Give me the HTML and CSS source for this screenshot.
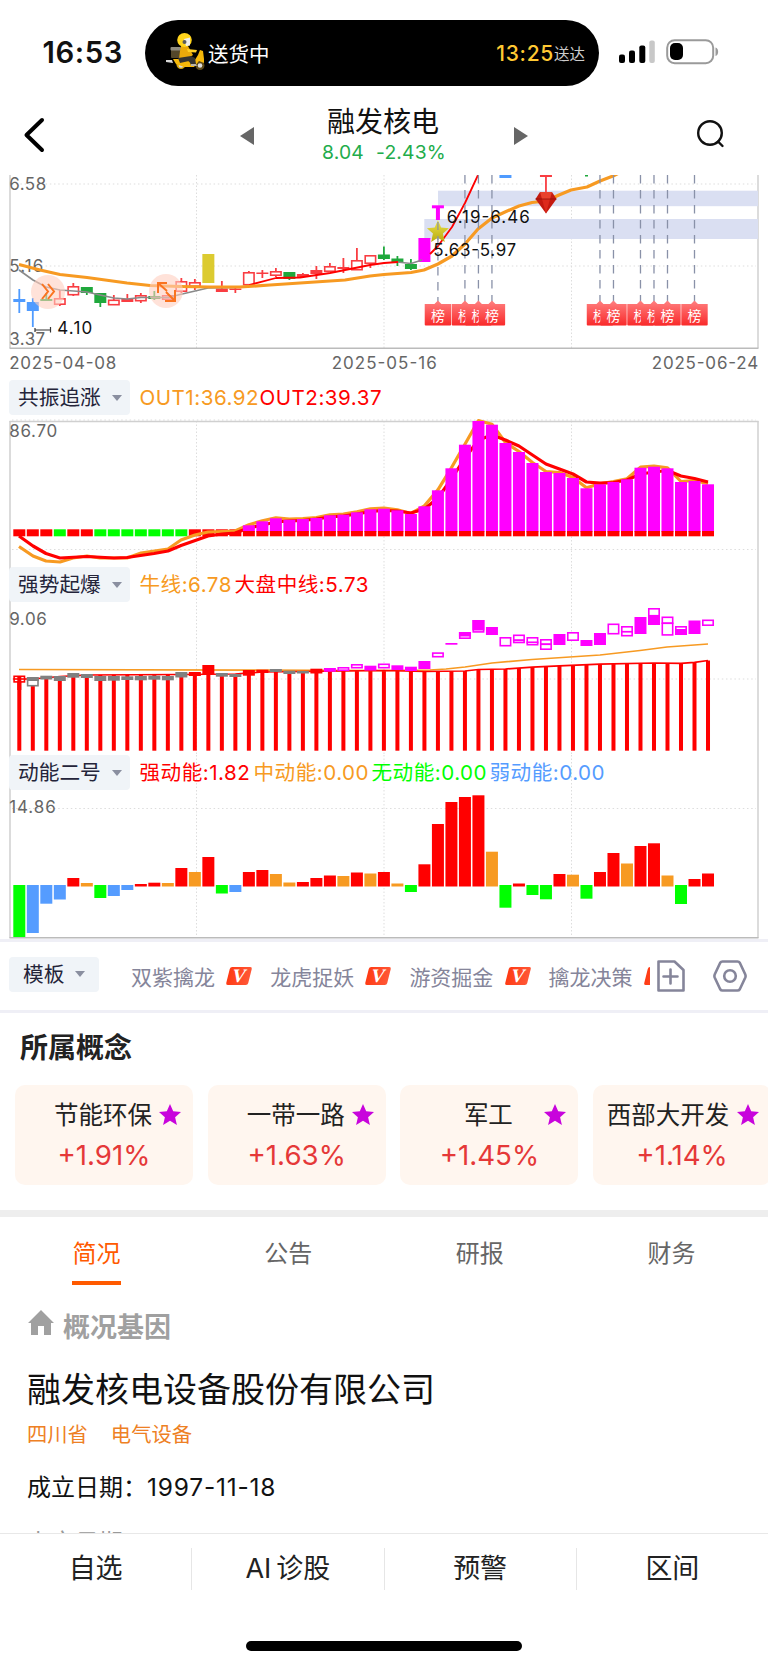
FILE: index.html
```html
<!DOCTYPE html>
<html lang="zh-CN">
<head>
    <meta charset="UTF-8">
    <meta name="viewport" content="width=device-width, initial-scale=1.0">
    <title>融发核电</title>
    <link rel="stylesheet" href="styles.css">
</head>
<body>
<div class="status-bar">
    <div class="clock">16:53</div>
    <div class="island">
        <svg class="rider" width="40" height="40" viewBox="0 0 40 40">
            <circle cx="16" cy="33.500" r="4.500" fill="#d8a60c"/><circle cx="16" cy="34.500" r="2.300" fill="#ddd"/>
            <circle cx="35" cy="34.500" r="4.500" fill="#5d4a1a"/><circle cx="35" cy="34.500" r="2.300" fill="#ddd"/>
            <path d="M1 29l6 0 1 3-7-1z" fill="#d8d8d8"/>
            <path d="M8 28h10l10 4 5-8 2-5 3 1 1 8v4l-5-2-5 6H19l-8-3z" fill="#f5b80a"/>
            <rect x="6" y="17" width="10" height="10" rx="1" fill="#54472a"/>
            <rect x="5.500" y="16" width="10.500" height="3.500" rx="1" fill="#8d8a80"/>
            <path d="M16 15h7l5 9-3 2-2 2h-9l1-8z" fill="#eaa90a"/>
            <path d="M22 18l10 1-1 2.500-8-.5z" fill="#ffcf25"/>
            <path d="M13 27l13-2 4 2 1 6-5 1-2-4-9 2z" fill="#34332f"/>
            <path d="M26 33l5 0 1 2h-6z" fill="#b9b4a8"/>
            <ellipse cx="19.500" cy="9" rx="7.300" ry="7" fill="#ffd41c"/>
            <path d="M19 8l6-1.500v8l-4 .5z" fill="#eee"/><circle cx="19.500" cy="11" r="2" fill="#5b5b5b"/>
        </svg>
        <span class="island-text">送货中</span>
        <span class="island-time">13:25</span>
        <span class="island-arrive">送达</span>
    </div>
    <svg class="signal" width="36" height="24" viewBox="0 0 36 24">
        <rect x="0" y="14.500" width="6" height="8.500" rx="2"/>
        <rect x="10" y="10.500" width="6" height="12.500" rx="2"/>
        <rect x="20.300" y="5.500" width="6" height="17.500" rx="2"/>
        <rect x="30.300" y="0.500" width="5.500" height="22.500" rx="2" fill="#c8c8c8"/>
    </svg>
    <svg class="battery" width="54" height="26" viewBox="0 0 54 26">
        <rect x="1.200" y="1.200" width="46" height="23" rx="7.500" fill="none" stroke="#9a9a9a" stroke-width="2"/>
        <rect x="4" y="4" width="13" height="17" rx="5"/>
        <path d="M49.500 8.500c3.500 1 3.500 7.500 0 8.500z" fill="#9a9a9a"/>
    </svg>
</div>

<header class="navbar">
    <svg class="back" width="22" height="36" viewBox="0 0 22 36"><path d="M19 3L3.500 18 19 33" fill="none" stroke="#000" stroke-width="4" stroke-linecap="round" stroke-linejoin="round"/></svg>
    <svg class="prev" width="14" height="18" viewBox="0 0 14 18"><path d="M14 0v18L0 9z" fill="#666"/></svg>
    <div class="stock">
        <h1>融发核电</h1>
        <p><span>8.04</span><span>-2.43%</span></p>
    </div>
    <svg class="next" width="14" height="18" viewBox="0 0 14 18"><path d="M0 0v18l14-9z" fill="#666"/></svg>
    <svg class="search" width="30" height="30" viewBox="0 0 30 30"><g fill="none" stroke="#111" stroke-width="2.400" stroke-linecap="round"><circle cx="14" cy="14" r="11.800"/><path d="M22 22.500l4.500 4.500"/></g></svg>
</header>

<svg id="kline" class="kline" width="768" height="205" viewBox="0 175 768 205"></svg>

<section class="panel">
    <svg id="panel1" width="768" height="187" viewBox="0 380 768 187"></svg>
    <div class="panel-head">
        <button class="picker">共振追涨<i class="caret"></i></button>
        <span class="val orange out1">OUT1:36.92</span><span class="val red">OUT2:39.37</span>
    </div>
</section>
<section class="panel">
    <svg id="panel2" width="768" height="188" viewBox="0 567 768 188"></svg>
    <div class="panel-head">
        <button class="picker">强势起爆<i class="caret"></i></button>
        <span class="val orange bull">牛线:6.78</span><span class="val red">大盘中线:5.73</span>
    </div>
</section>
<section class="panel">
    <svg id="panel3" width="768" height="184" viewBox="0 755 768 184"></svg>
    <div class="panel-head">
        <button class="picker">动能二号<i class="caret"></i></button>
        <span class="val red force">强动能:1.82</span><span class="val orange force2">中动能:0.00</span><span class="val green force3">无动能:0.00</span><span class="val blue">弱动能:0.00</span>
    </div>
</section>

<div class="template-bar">
    <button class="picker small">模板<i class="caret"></i></button>
    <div class="templates">
        <span>双紫擒龙</span><i class="vip">V</i>
        <span>龙虎捉妖</span><i class="vip">V</i>
        <span>游资掘金</span><i class="vip">V</i>
        <span>擒龙决策</span><i class="vip"></i>
    </div>
    <svg class="add" width="28" height="32" viewBox="0 0 28 32"><g fill="none" stroke="#85859a" stroke-width="2.600" stroke-linejoin="round"><path d="M1.500 1.500h16l9 8.500v20.500h-25z"/><path d="M6.500 16.500h14M13.500 9.500v14" stroke-linecap="round"/></g></svg>
    <svg class="gear" width="34" height="32" viewBox="0 0 34 32"><g fill="none" stroke="#85859a" stroke-width="2.600" stroke-linejoin="round"><path d="M9.500 1.500h15q1.500 0 2.300 1.300l5.400 11.400q.8 1.800 0 3.600l-5.400 11.400q-.8 1.300-2.300 1.300h-15q-1.500 0-2.300-1.300L1.800 17.800q-.8-1.800 0-3.600L7.200 2.800Q8 1.500 9.500 1.500z"/><circle cx="17" cy="16" r="5.800"/></g></svg>
</div>

<section class="concepts">
    <h2>所属概念</h2>
    <div class="cards">
        <div class="card"><p>节能环保</p><b>+1.91%</b><svg class="star" viewBox="0 0 24 24"><path d="M12 1l3.200 7.300 7.800.7-5.900 5.200L18.900 22 12 17.800 5.100 22l1.800-7.800L1 9l7.800-.7z"/></svg></div>
        <div class="card"><p>一带一路</p><b>+1.63%</b><svg class="star" viewBox="0 0 24 24"><path d="M12 1l3.200 7.300 7.800.7-5.900 5.200L18.900 22 12 17.800 5.100 22l1.800-7.800L1 9l7.800-.7z"/></svg></div>
        <div class="card"><p>军工</p><b>+1.45%</b><svg class="star" viewBox="0 0 24 24"><path d="M12 1l3.200 7.300 7.800.7-5.900 5.200L18.900 22 12 17.800 5.100 22l1.800-7.800L1 9l7.800-.7z"/></svg></div>
        <div class="card long"><p>西部大开发</p><b>+1.14%</b><svg class="star" viewBox="0 0 24 24"><path d="M12 1l3.200 7.300 7.800.7-5.900 5.200L18.900 22 12 17.800 5.100 22l1.800-7.800L1 9l7.800-.7z"/></svg></div>
    </div>
</section>

<nav class="tabs">
    <a class="active">简况</a>
    <a>公告</a>
    <a>研报</a>
    <a>财务</a>
</nav>

<section class="profile">
    <h3><svg width="26" height="26" viewBox="0 0 26 26"><path d="M13 0l13 13h-3v12h-7v-9h-6v9H3V13H0z" fill="#a0a0a0"/></svg>概况基因</h3>
    <h2>融发核电设备股份有限公司</h2>
    <p class="tags"><span>四川省</span><span>电气设备</span></p>
    <p class="row"><span>成立日期：</span>1997-11-18</p>
    <p class="row faded"><span>上市日期：</span>2010-03-12</p>
</section>

<footer class="bottom-bar">
    <div class="actions">
        <a>自选</a>
        <a><span class="ai">AI</span>诊股</a>
        <a>预警</a>
        <a>区间</a>
    </div>
    <div class="home-indicator"></div>
</footer>

<script src="script.js"></script>
</body>
</html>
```
FILE: styles.css
```css
* { margin: 0; padding: 0; box-sizing: border-box; font-family: Inter, "Noto Sans CJK SC", sans-serif; }
body {
    width: 768px;
    height: 1665px;
    background: #fff;
    color: #111;
    overflow: hidden;
}
svg { display: block; flex-shrink: 0; }
button { border: none; }
a { text-decoration: none; }

/* status bar */
.status-bar { height: 96px; padding-top: 20px; display: flex; }
.clock { width: 145px; padding-left: 42.5px; line-height: 66px; font-size: 29.3px; font-weight: 600; letter-spacing: 0.6px; }
.island {
    width: 454px; height: 66px; border-radius: 33px; background: #000;
    display: flex; align-items: center; padding: 0 14px 0 20px; color: #fff;
}
.rider { margin-top: -4px; }
.island-text { font-size: 20.5px; margin-left: 3px; }
.island-time { font-size: 21px; font-weight: 500; color: #ffc933; margin-left: auto; letter-spacing: 0.7px; }
.island-arrive { font-size: 15.5px; color: #ccc; }
.signal { margin: 20px 0 0 20px; }
.battery { margin: 19px 0 0 11px; }

/* title */
.navbar { height: 79px; display: flex; padding-left: 23px; }
.back { margin-top: 21px; }
.prev { margin: 31px 0 0 195px; }
.stock { width: 260px; text-align: center; }
.stock h1 { font-size: 28px; font-weight: 400; line-height: 34px; margin: 9px 2px 0 0; }
.stock p { font-size: 19.3px; line-height: 24px; margin-top: 1px; color: #22ac4b; display: flex; justify-content: center; gap: 12px; letter-spacing: 0.2px; }
.next { margin-top: 31px; }
.search { margin: 23px 0 0 168px; }

/* charts */
.panel { display: grid; }
.panel > * { grid-area: 1 / 1; }
.panel-head { display: flex; height: 35px; padding-left: 9px; z-index: 1; }
.picker {
    width: 121px; height: 35px; border-radius: 4px; background: #f0f4f8;
    color: #24243a; font-size: 20.7px; line-height: 35px; text-align: left; padding-left: 9px;
    display: flex; align-items: center;
}
.caret { border: 5px solid transparent; border-top: 6px solid #8a8fa0; border-bottom: none; margin-left: 11px; }
.val { font-size: 20.6px; line-height: 35px; white-space: nowrap; letter-spacing: 0.5px; }
.val:nth-child(2) { margin-left: 9.5px; }
.out1 { width: 120px; }
.bull { width: 95px; }
.force { width: 114px; }
.force2 { width: 118px; }
.force3 { width: 118px; }
.orange { color: #f79a22; }
.red { color: #f00; }
.green { color: #0f0; }
.blue { color: #559cff; }

.template-bar {
    height: 74px; border-top: 3px solid #efeff6; border-bottom: 3px solid #efeff6;
    display: flex; padding: 14px 0 0 9px;
}
.picker.small { width: 90px; padding-left: 14px; margin-top: 0.5px; }
.templates { display: flex; align-items: center; width: 519px; height: 40px; margin-left: 32px; overflow: hidden; }
.templates span { font-size: 21px; width: 84px; margin-right: 11px; color: #85859a; flex-shrink: 0; }
.vip {
    width: 22px; height: 18px; margin: 0 20px 0 2.2px; flex-shrink: 0;
    background: linear-gradient(90deg, #ff3b14, #ff5736); border-radius: 2px; transform: skewX(-14deg);
    color: #fff; font: 700 19px/18px "Liberation Serif", serif; text-align: center;
}
.add { margin: 4px 0 0 7px; }
.gear { margin: 4px 0 0 28px; }

/* concepts */
.concepts { height: 204px; padding-left: 15px; overflow: hidden; border-bottom: 7px solid #eee; }
.concepts h2 { font-size: 28px; line-height: 40px; margin: 15px 0 17px 5px; font-weight: 700; color: #222; }
.cards { display: flex; gap: 14.7px; }
.card { position: relative; width: 178px; height: 100px; border-radius: 10px; background: #fff6ef; text-align: center; flex-shrink: 0; padding-top: 12px; }
.card p { font-size: 24.5px; line-height: 36px; color: #222; margin-right: 2px; }
.card.long p { margin-right: 28px; }
.card b { display: block; font-weight: 400; font-size: 27.7px; line-height: 40px; color: #e53838; margin-top: 2px; }
.star { position: absolute; right: 11px; top: 18px; width: 24px; height: 24px; fill: #c804dc; }

/* tabs */
.tabs { display: flex; height: 68px; padding: 17px 72px 0; justify-content: space-between; }
.tabs a { font-size: 24px; line-height: 40px; height: 51px; width: 49px; text-align: center; color: #666; white-space: nowrap; }
.tabs .active { color: #ff5a00; border-bottom: 4px solid #ff5a00; }

/* profile */
.profile { height: 248px; padding: 22px 27px 0; overflow: hidden; }
.profile h3 { display: flex; gap: 9px; font-size: 27px; line-height: 42px; font-weight: 600; color: #a0a0a0; }
.profile h3 svg { margin: 3px 0 0 1px; }
.profile h2 { font-size: 34px; font-weight: 400; line-height: 50px; margin-top: 16px; }
.tags { font-size: 20.3px; line-height: 30px; color: #ee8024; margin-top: 5px; display: flex; gap: 23px; }
.row { font-size: 24.5px; line-height: 34px; margin-top: 20px; letter-spacing: 0.8px; white-space: nowrap; }
.row span { display: inline-block; width: 120px; font-size: 24px; letter-spacing: 0; }
.faded { color: #999; margin-top: 20px; letter-spacing: 0.3px; }

/* bottom */
.bottom-bar { height: 132px; border-top: 1px solid #e8e8e8; background: #fff; position: relative; }
.actions { display: flex; padding-top: 14px; }
.actions a { flex: 1; height: 42px; line-height: 42px; font-size: 27px; text-align: center; color: #222; border-left: 1px solid #e6e6e6; }
.actions a:first-child { border-left: none; }
.ai { margin-right: 5px; }
.home-indicator { width: 276px; height: 10px; border-radius: 5px; background: #000; margin: 51px auto 0; }
```
FILE: script.js
```js
const STEP = 13.504, X0 = 19.3;
const cx = i => X0 + STEP * i;
const RED = '#f00', GREEN = '#0f0', MAGENTA = '#f0f', ORANGE = '#f79a22', BLUE = '#559cff', GRAY = '#808080';

const rect = (x, y, w, h, fill, extra = '') => `<rect x="${x}" y="${y}" width="${w}" height="${h}" fill="${fill}" ${extra}/>`;
const line = (x1, y1, x2, y2, color, w = 1, extra = '') => `<line x1="${x1}" y1="${y1}" x2="${x2}" y2="${y2}" stroke="${color}" stroke-width="${w}" ${extra}/>`;
const poly = (pts, color, w) => `<polyline points="${pts}" fill="none" stroke="${color}" stroke-width="${w}" stroke-linejoin="round"/>`;
const label = (s, x, y, len, color = '#666') => `<text x="${x - 0.8}" y="${y}" font-size="17" fill="${color}" textLength="${len}">${s}</text>`;
const bar = (i, top, bottom, fill) => rect(cx(i) - 6, top, 12, bottom - top, fill);
const box = (i, top, bottom, color) => rect(cx(i) - 5.2, top + 0.8, 10.4, Math.max(bottom - top - 1.6, 0.1), '#fff', `stroke="${color}" stroke-width="1.6"`);

function grid(top, bottom, rows) {
    let s = '';
    for (const x of [196.5, 384, 571.5]) s += line(x, top, x, bottom, '#ddd', 1, 'stroke-dasharray="1.5 2"');
    for (const y of rows) s += line(12, y, 756, y, '#ddd', 1.2, 'stroke-dasharray="1.5 2.7"');
    s += line(10, top, 10, bottom, '#ccc', 1.4) + line(758, top, 758, bottom, '#d4d4d4', 1.6);
    return s;
}

// ---- k line ----
function drawKline() {
    let s = grid(175, 348, [184, 266]);
    s += line(9.5, 348.3, 758.5, 348.3, '#bbb', 1.4);
    s += rect(438, 190.7, 320, 15.5, '#dadff2') + rect(424.3, 219, 333.7, 20, '#dadff2');
    s += label('6.58', 10, 190, 37) + label('5.16', 10, 272, 34) + label('3.37', 10, 344.5, 36);

    // [index, top, bottom, high, low, kind]
    const up = '#f93d42', down = '#1fa83c', blue = '#4f9bff';
    const candles = [
        [0, 299, 302, 289, 313, 'b'], [1, 302, 311, 298, 327, 'b'], [2, 299, 301, 293, 301, 'g'],
        [3, 298, 305, 290, 306, 'r'], [4, 286, 295.5, 283, 296, 'r'], [5, 287, 293, 287, 295, 'g'],
        [6, 293, 303, 293, 307, 'g'], [7, 299.5, 305.5, 295, 305, 'r'], [8, 299, 302, 294, 302, 'r'],
        [9, 295, 301.5, 293, 303, 'r'], [10, 296, 299, 291, 300, 'g'], [11, 295, 300, 295, 300, 'r'],
        [12, 281, 292, 278, 293, 'r'], [13, 282, 287, 279, 290, 'r'],
        [15, 288.5, 292, 281, 292, 'r'], [16, 288.5, 290, 288, 293, 'r'], [17, 272, 285.5, 271, 285, 'r'],
        [18, 272.5, 274, 270, 278, 'r'], [19, 271, 276, 268, 277, 'r'], [20, 272, 279, 272, 280, 'g'],
        [21, 274, 277, 273, 278, 'r'], [22, 270, 274, 266, 279, 'r'], [23, 266, 272, 263, 272, 'r'],
        [24, 267, 269, 258, 273, 'r'], [25, 260, 270.5, 248, 270, 'r'], [26, 255, 264, 255, 268, 'r'],
        [27, 254.5, 259, 246.5, 260, 'g'], [28, 258.5, 262, 256, 266, 'g'], [29, 264, 269, 259, 270, 'g']
    ];
    for (const [i, t, b, h, l, k] of candles) {
        const c = k === 'r' ? up : k === 'g' ? down : blue;
        s += line(cx(i), h, cx(i), l, c, 1.8);
        s += k === 'r' && b - t > 4 ? box(i, t, b, c) : bar(i, t, b, c);
    }
    s += bar(14, 254, 283, '#dccb30') + bar(30, 238, 262, MAGENTA);
    s += bar(31, 205.3, 208.3, MAGENTA) + rect(cx(31) - 2, 208, 4, 12, MAGENTA);
    s += bar(36, 175, 178, blue) + rect(585, 175, 3, 1.5, down);
    s += bar(39, 175, 177, up) + line(cx(39), 176, cx(39), 192, up, 1.8);

    s += poly('19,270 33,280 46,287 60,290 87,292 100,295 114,298 127,299 141,297.500 168,297.500 180,294.500 208,288 235,287.500', '#8a8a8a', 1.6);
    s += poly('397,262 411,263.500 422,260', '#8a8a8a', 1.6);
    s += poly('249,285 276,278 300,277.500 330,273 355,268 370,265 384,263 398,262', RED, 1.8);
    s += poly('430,254 438,246 452,227 465,203 478,175', RED, 1.8);
    s += poly('19,264.500 40,270 60,274.500 87,277.500 127,283 150,285.500 180,286.500 210,287 240,287 270,285 315,282 345,280 370,276 384,274.500 411,272.500 424,270 438,264 452,256 465,244 478,229 492,218 505,212 519,206 532,202.500 546,201 559,195 571,190 587,187 600,181 613,176 619,173', ORANGE, 3.2);

    for (const [x, y] of [[48, 292], [166, 291]]) s += `<circle cx="${x}" cy="${y}" r="17" fill="#ffcfc0" opacity=".6"/>`;
    s += '<g fill="none" stroke="#fa7420" stroke-width="2"><path d="M42 284l6 7.500-6 7.500M48 284l6 7.500-6 7.500"/>';
    s += '<path d="M158 293v-10h9M158 283l9 8M175 290v11h-10M175 301l-9-9"/></g>';

    // ranking list marks
    const marks = [31, 33, 34, 35, 43, 44, 46, 47, 48, 50];
    for (const i of marks) {
        const x = cx(i);
        s += line(x, i === 31 ? 222 : 175, x, 302, '#8991a8', 1.3, 'stroke-dasharray="8.500 6.500"');
    }
    s += label('6.19-6.46', 447.5, 223, 83, '#111') + label('5.63-5.97', 434, 255.5, 83, '#111');
    for (const i of marks) {
        const x = cx(i);
        s += `<path d="M${x - 13.2} 304h9.700l3.500-3.500 3.500 3.500h9.700v20.500q0 1-1 1h-24.400q-1 0-1-1z" fill="url(#tag)"/>`;
        s += `<text x="${x}" y="320.500" font-size="14" fill="#fff" text-anchor="middle">榜</text>`;
    }
    const sx = cx(31);
    s += `<path transform="translate(${sx - 11} 220)" d="M11 0l3.200 7.500 7.800.8-6 5.200 1.800 8.500-6.800-4.300L4.200 22 6 13.500 0 8.300l7.800-.8z" fill="url(#gold)"/>`;
    s += line(sx, 222, sx, 240, '#8991a8', 1.2, 'stroke-dasharray="8 6"');
    s += '<path d="M540 192h12l4.500 7L546 213.500 535.500 199z" fill="#c41a10"/><path d="M540 192h12l-2 7h-8z" fill="#e8402c"/><path d="M542 199h8l-4 14.500z" fill="#dd2a1c"/><path d="M535.500 199h21" stroke="#8f0f08" stroke-width=".8"/>';

    s += '<path d="M35 328v4M35 330h15.500M50.500 327v5.500" stroke="#333" stroke-width="1.200" fill="none"/>';
    s += label('4.10', 58, 333.6, 35, '#111');
    s += label('2025-04-08', 10, 369, 107) + label('2025-05-16', 332.5, 369, 105) + label('2025-06-24', 652.5, 369, 106.5);
    const defs = '<defs><linearGradient id="tag" x2="0" y2="1"><stop offset="0" stop-color="#ff8080"/><stop offset="1" stop-color="#f92a2a"/></linearGradient>' +
        '<linearGradient id="gold" x2="0" y2="1"><stop offset="0" stop-color="#ece24a"/><stop offset="1" stop-color="#b8ab10"/></linearGradient></defs>';
    document.getElementById('kline').innerHTML = defs + s;
}

// ---- 共振追涨 ----
function drawPanel1() {
    let s = grid(421, 567, [420, 549.5]) + line(9.5, 421.5, 758.5, 421.5, '#d0d0d0', 1.4);
    s += label('86.70', 10, 437.3, 48);
    const tops = [525.3, 521.3, 518.3, 519.7, 519, 518, 515.3, 514.7, 512.3, 509.3, 508.7, 510.3, 514, 506.3, 490.3, 468.3, 444.7, 421, 424.7, 443, 452, 463, 472, 473, 478, 488.3, 484.3, 482, 479.3, 467.7, 466.7, 468.3, 482, 481, 484.3];
    const reds = [528, 525, 522, 521, 520.5, 519, 517, 516, 514, 511.5, 510.5, 511, 513, 509, 498, 479, 458, 440, 435, 440, 446, 455, 464, 469, 474, 482, 483.2, 482.5, 480, 474, 472, 470.5, 476, 478.5, 482];
    const line1 = '19,546.500 33,556 46,561 60,562 73,558 87,556 100,558 127,558 141,553 168,549 181,540 195,535 208,532 222,531.500 235,531 ' + tops.map((y, k) => `${cx(k + 17)},${y - 0.5}`).join(' ');
    const line2 = '19,536 33,546 46,553.500 60,558 87,556.500 114,558 127,557.500 154,553.500 168,551 181,545.500 208,536 222,534 235,533 ' + reds.map((y, k) => `${cx(k + 17)},${y}`).join(' ');
    let strip = '';
    const kinds = 'rrrgrrgggggggrrrr';
    for (let i = 0; i < 17; i++) strip += bar(i, 529.3, 536.3, kinds[i] === 'r' ? RED : GREEN);
    s += strip + poly(line1, ORANGE, 3.2) + poly(line2, RED, 3.2);
    tops.forEach((y, k) => { s += bar(k + 17, y, 532, MAGENTA) + bar(k + 17, 531, 536.3, RED); });
    document.getElementById('panel1').innerHTML = s;
}

// ---- 强势起爆 ----
function drawPanel2() {
    let s = grid(567, 755, [679]) + label('9.06', 10, 625, 37.5);
    const mid = [[0, 679], [1, 679], [3, 676.5], [5, 675], [12, 674.5], [16, 674], [18, 672], [24, 671], [27, 670.5], [30, 671.5], [33, 671], [34, 669.5], [36, 669], [38, 667.2], [40, 665.8], [43, 664.2], [47, 663], [49, 663.4], [50, 662.3], [51, 660.5]];
    const at = i => {
        const k = mid.findIndex(p => p[0] >= i);
        if (mid[k][0] === i) return mid[k][1];
        const [a, b] = [mid[k - 1], mid[k]];
        return a[1] + (b[1] - a[1]) * (i - a[0]) / (b[0] - a[0]);
    };
    for (let i = 0; i < 52; i++) s += rect(cx(i) - 2, at(i), 4, 750.7 - at(i), RED);
    s += poly('19,669.500 384,670.500 430,670 446,669 465,667 492,663 532,659.500 600,655 640,650.500 667,647 708,644', ORANGE, 1.7);
    s += poly(mid.map(p => `${cx(p[0])},${p[1]}`).join(' '), RED, 1.7);

    const solid = {
        r: [[13, 672, 676], [14, 665, 674], [17, 670, 675.7], [18, 669.7, 673], [22, 668.7, 673.5]],
        g: [[1, 677, 681], [2, 675.7, 679.5], [3, 676, 681], [4, 673, 677.7], [5, 674, 678], [6, 676, 681], [7, 676, 680.7], [8, 676.3, 680], [9, 676, 680.3], [10, 675.7, 679.7], [11, 676, 680.3], [12, 672, 677.5], [15, 673, 676.7], [16, 674, 677], [19, 669, 672], [20, 670.7, 674], [21, 671, 673.5]],
        m: [[23, 668, 671.7], [26, 665.7, 670.5], [28, 665.3, 670], [29, 666.7, 671], [30, 661, 669], [32, 643, 644.7], [33, 632, 636.5], [34, 620, 630.5], [35, 627, 635], [40, 634, 645], [42, 640, 646], [43, 633, 645], [46, 617, 634], [49, 629, 635], [50, 620.5, 634]]
    };
    const hollow = [[24, 667, 671], [25, 664, 668.5], [27, 663.5, 668.5], [31, 652.3, 657.5], [33, 632, 639], [34, 620, 632.7], [36, 637, 646.5], [37, 634.5, 641], [37, 639.5, 643.3], [38, 637, 643.5], [38, 641.5, 645.5], [39, 639, 645], [39, 643.5, 650], [41, 632, 641], [44, 623.5, 634.5], [45, 626, 632.5], [45, 631, 636.5], [47, 608, 616.5], [48, 616.5, 624], [48, 622.5, 635.7], [49, 626, 632], [51, 619.5, 626]];
    s += box(0, 675.5, 682.7, RED) + line(cx(0) - 6, 679, cx(0) + 6, 679, RED, 1.6) + line(cx(0), 676, cx(0), 690, RED, 4);
    s += box(1, 679, 686.5, GRAY);
    for (const [i, t, b] of hollow) s += box(i, t, b, MAGENTA);
    for (const k in solid) for (const [i, t, b] of solid[k]) s += bar(i, t, b, { r: RED, g: GRAY, m: MAGENTA }[k]);
    s += bar(47, 615.5, 625, MAGENTA);
    document.getElementById('panel2').innerHTML = s;
}

// ---- 动能二号 ----
function drawPanel3() {
    let s = grid(755, 938, [808.5]) + line(9.5, 937.8, 758.5, 937.8, '#bbb', 1.4) + label('14.86', 10, 812.7, 46.5);
    const data = 'g937 b933 b903.700 b899.500 r878 o883 g898 b896 b890 r884 r882.700 o883 r868 o872 r857 g893.500 b892 r872 r870 o874 o882.500 r882 r878 r875.500 o876 r872.500 o873.500 r872 o883.500 g892 r864.300 r824 r802 r797 r795.300 o851.700 g907.700 r883.500 g895 g899.300 r874 o874.700 g898.700 r872 r853 o863.500 r846 r843.300 o875.500 g904 r879 r873.500';
    const colors = { r: RED, g: GREEN, b: BLUE, o: ORANGE };
    data.split(' ').forEach((d, i) => {
        const y = parseFloat(d.slice(1)), c = colors[d[0]];
        s += y > 885.5 ? bar(i, 885, y, c) : bar(i, y, 886.5, c);
    });
    document.getElementById('panel3').innerHTML = s;
}

drawKline();
drawPanel1();
drawPanel2();
drawPanel3();
```
